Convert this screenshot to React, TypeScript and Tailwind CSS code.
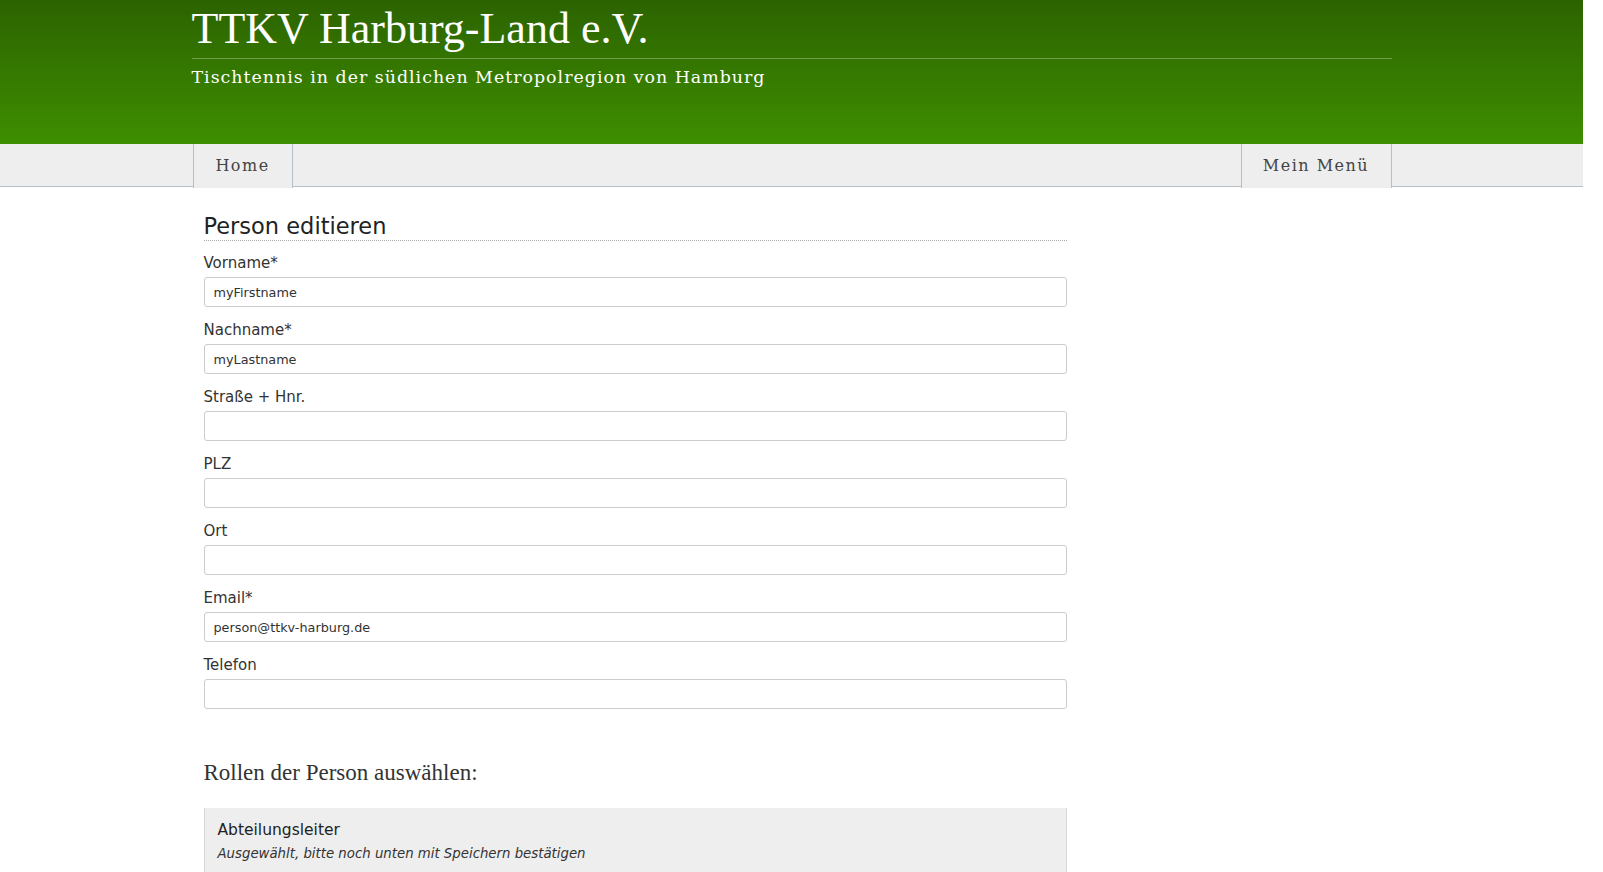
import React from 'react';

const serif = { fontFamily: '"Liberation Serif", "DejaVu Serif", serif' };
const wideSerif = { fontFamily: '"DejaVu Serif", "Liberation Serif", serif' };

const fields: { label: string; value: string }[] = [
  { label: 'Vorname*', value: 'myFirstname' },
  { label: 'Nachname*', value: 'myLastname' },
  { label: 'Straße + Hnr.', value: '' },
  { label: 'PLZ', value: '' },
  { label: 'Ort', value: '' },
  { label: 'Email*', value: 'person@ttkv-harburg.de' },
  { label: 'Telefon', value: '' },
];

const Field: React.FC<{ label: string; value: string }> = ({ label, value }) => (
  <div className="mb-[13px]">
    <label className="block text-[15px] leading-[20px] text-[#333] mb-[4px]">{label}</label>
    <input
      readOnly
      value={value}
      className="block w-full h-[30px] rounded-[3px] border border-[#ccc] bg-white px-[9px] text-[12.8px] text-[#333] outline-none"
      style={{ fontFamily: '"DejaVu Sans", sans-serif' }}
    />
  </div>
);

const App: React.FC = () => {
  return (
    <div className="w-[1583px] min-h-[872px] bg-white" style={{ fontFamily: '"DejaVu Sans", Verdana, sans-serif' }}>
      <header className="h-[144px] bg-gradient-to-b from-[#2c6300] to-[#3e8f00]">
        <div className="w-[1200px] mx-auto pt-[3px]">
          <h1 className="text-white text-[44px] leading-[52px]" style={serif}>
            TTKV Harburg-Land e.V.
          </h1>
          <div className="h-px bg-[#ffffff]/30 mt-[3px]" />
          <p className="text-white text-[17.4px] leading-[26px] tracking-[1px] mt-[5px]" style={wideSerif}>
            Tischtennis in der südlichen Metropolregion von Hamburg
          </p>
        </div>
      </header>

      <nav className="h-[43px] bg-[#eeeeee] border-b border-[#b4bfc8]">
        <div className="w-[1200px] mx-auto flex justify-between items-start h-[43px]">
          <a className="ml-[1px] h-[44px] w-[100px] border-x border-[#b4bfc8] bg-[#eeeeee] flex items-center justify-center text-[16px] tracking-[1.5px] text-[#444] relative z-10" style={wideSerif}>
            Home
          </a>
          <a className="h-[44px] w-[151px] border-x border-[#b4bfc8] bg-[#eeeeee] flex items-center justify-center text-[16px] tracking-[1.5px] text-[#444] relative z-10" style={wideSerif}>
            Mein Menü
          </a>
        </div>
      </nav>

      <main className="w-[1200px] mx-auto">
        <div className="ml-[12px] w-[863px] pt-[25px]">
          <h2 className="text-[22.5px] leading-[28px] text-[#222] border-b border-dotted border-[#aaa] mb-[12px]">
            Person editieren
          </h2>
          {fields.map((f) => (
            <Field key={f.label} label={f.label} value={f.value} />
          ))}

          <h3 className="mt-[49px] text-[23px] leading-[30px] text-[#333] mb-[20px]" style={serif}>
            Rollen der Person auswählen:
          </h3>

          <div className="bg-[#eeeeee] border-l border-r border-[#d8d8d8] px-[13px] pt-[12px] pb-[14px]">
            <div className="text-[15.5px] leading-[20px] text-[#222]">Abteilungsleiter</div>
            <div className="text-[13.3px] leading-[18px] italic text-[#333] mt-[5px]">
              Ausgewählt, bitte noch unten mit Speichern bestätigen
            </div>
          </div>
        </div>
      </main>
    </div>
  );
};

export default App;
